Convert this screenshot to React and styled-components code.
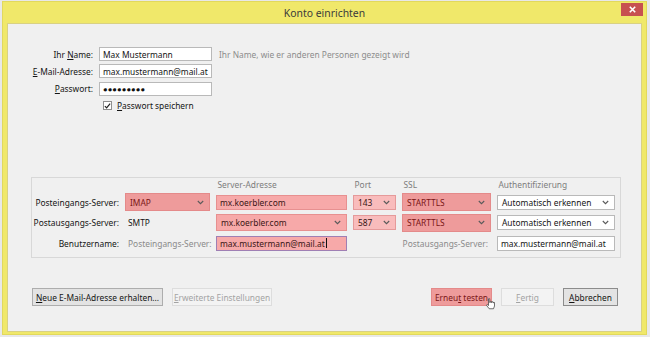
import React from "react";
import styled, { createGlobalStyle } from "styled-components";

const GlobalStyle = createGlobalStyle`
  html, body {
    margin: 0;
    padding: 0;
  }
  body {
    width: 650px;
    height: 337px;
    overflow: hidden;
    background: #e8e8e8;
    font-family: "Noto Sans", "Open Sans", sans-serif;
    font-size: 8.4px;
    color: #141414;
  }
`;

const tones = {
  plain: { bg: "#ffffff", border: "#b9b9b9", color: "#141414" },
  error: { bg: "#f7a9a9", border: "#e79090", color: "#3a1515" },
  strong: { bg: "#ee9b9b", border: "#e48a8a", color: "#7a1616" },
  focus: { bg: "#f7a9a9", border: "#9f7fb4", color: "#3a1515" },
  soft: { bg: "#f9bcbc", border: "#e59a9a", color: "#3a1515" },
};

function Chevron() {
  return (
    <ChevronIcon width="7" height="5" viewBox="0 0 7 5">
      <path d="M0.8 1 L3.5 3.7 L6.2 1" />
    </ChevronIcon>
  );
}

function HandCursor() {
  return (
    <Cursor width="9" height="12" viewBox="0 0 18 24">
      <path d="M5 1.5 C5 0.7 7.5 0.7 7.5 1.5 V9 H8.5 V7 C8.5 6.2 11 6.2 11 7 V9 H11.8 V7.8 C11.8 7 14.2 7 14.2 7.8 V9.8 H15 V9 C15 8.2 17 8.2 17 9 V16 L15 21.5 H6.5 L1.2 15 C0.6 14 1.8 12.6 3 13.4 L5 15 Z" />
    </Cursor>
  );
}

function App() {
  return (
    <>
      <GlobalStyle />
      <Window>
        <TitleBar>
          <span />
          <Title>Konto einrichten</Title>
          <CloseButton>
            <svg width="7" height="7" viewBox="0 0 7 7">
              <path d="M0.8 0.8 L6.2 6.2 M6.2 0.8 L0.8 6.2" />
            </svg>
          </CloseButton>
        </TitleBar>

        <Client>
          <IdentityGrid>
            <FieldLabel>
              Ihr <u>N</u>ame:
            </FieldLabel>
            <TextField $tone="plain">Max Mustermann</TextField>
            <Hint>Ihr Name, wie er anderen Personen gezeigt wird</Hint>

            <FieldLabel>
              <u>E</u>-Mail-Adresse:
            </FieldLabel>
            <TextField $tone="plain">max.mustermann@mail.at</TextField>
            <span />

            <FieldLabel>
              <u>P</u>asswort:
            </FieldLabel>
            <TextField $tone="plain">
              <Dots>●●●●●●●●●</Dots>
            </TextField>
            <span />

            <span />
            <CheckRow>
              <CheckBox>
                <svg width="8" height="8" viewBox="0 0 8 8">
                  <path d="M1 4.2 L3 6.2 L7 1.2" />
                </svg>
              </CheckBox>
              <span>
                <u>P</u>asswort speichern
              </span>
            </CheckRow>
            <span />
          </IdentityGrid>

          <ServerGroup>
            <span />
            <span />
            <ColumnHead>Server-Adresse</ColumnHead>
            <ColumnHead>Port</ColumnHead>
            <ColumnHead>SSL</ColumnHead>
            <ColumnHead>Authentifizierung</ColumnHead>

            <RowLabel>Posteingangs-Server:</RowLabel>
            <SelectBox $tone="strong" $h={18}>
              <span>IMAP</span>
              <Chevron />
            </SelectBox>
            <TextField $tone="error" $h={15}>mx.koerbler.com</TextField>
            <SelectBox $tone="soft">
              <span>143</span>
              <Chevron />
            </SelectBox>
            <SelectBox $tone="strong" $h={18}>
              <span>STARTTLS</span>
              <Chevron />
            </SelectBox>
            <SelectBox $tone="plain">
              <span>Automatisch erkennen</span>
              <Chevron />
            </SelectBox>

            <RowLabel>Postausgangs-Server:</RowLabel>
            <PlainValue>SMTP</PlainValue>
            <SelectBox $tone="error" $h={17}>
              <span>mx.koerbler.com</span>
              <Chevron />
            </SelectBox>
            <SelectBox $tone="soft">
              <span>587</span>
              <Chevron />
            </SelectBox>
            <SelectBox $tone="strong" $h={18}>
              <span>STARTTLS</span>
              <Chevron />
            </SelectBox>
            <SelectBox $tone="plain">
              <span>Automatisch erkennen</span>
              <Chevron />
            </SelectBox>

            <RowLabel>Benutzername:</RowLabel>
            <GreyValue>Posteingangs-Server:</GreyValue>
            <TextField $tone="focus" $h={15}>
              max.mustermann@mail.at<Caret />
            </TextField>
            <GreyValue $span={2} $right>
              Postausgangs-Server:
            </GreyValue>
            <TextField $tone="plain" $h={15}>
              max.mustermann@mail.at
            </TextField>
          </ServerGroup>

          <ButtonBar>
            <Button $w={131}>
              <span>
                <u>N</u>eue E-Mail-Adresse erhalten...
              </span>
            </Button>
            <Button $w={100} $disabled>
              <span>
                <u>E</u>rweiterte Einstellungen
              </span>
            </Button>
            <Spacer />
            <Button $w={61} $tone="strong">
              <span>
                Erneu<u>t</u> testen
              </span>
              <HandCursor />
            </Button>
            <Button $w={53} $disabled>
              <span>
                <u>F</u>ertig
              </span>
            </Button>
            <Button $w={55} $default>
              <span>
                <u>A</u>bbrechen
              </span>
            </Button>
          </ButtonBar>
        </Client>
      </Window>
    </>
  );
}

const Window = styled.div`
  margin: 1px 0 0 2px;
  width: 645px;
  height: 334px;
  box-sizing: border-box;
  background: #f0e86a;
  border: 1px solid #e2d95c;
  padding: 0 4px 2px 4px;
  display: flex;
  flex-direction: column;
`;

const TitleBar = styled.div`
  height: 21px;
  display: grid;
  grid-template-columns: 1fr auto 1fr;
  align-items: center;
`;

const Title = styled.div`
  font-size: 10.4px;
  color: #3a3a3a;
  padding-top: 1px;
`;

const CloseButton = styled.div`
  justify-self: end;
  align-self: start;
  margin: 1px -1px 0 0;
  width: 22px;
  height: 13px;
  background: #c75050;
  display: flex;
  align-items: center;
  justify-content: center;
  svg path {
    stroke: #ffffff;
    stroke-width: 1.6;
    fill: none;
  }
`;

const Client = styled.div`
  flex: 1;
  background: #f0f0f0;
  border: 1px solid #d9d183;
  padding-top: 23px;
  display: flex;
  flex-direction: column;
`;

const IdentityGrid = styled.div`
  display: grid;
  grid-template-columns: 85px 113px auto;
  grid-auto-rows: 14px;
  column-gap: 6px;
  row-gap: 3.3px;
  align-items: center;
`;

const FieldLabel = styled.div`
  text-align: right;
  white-space: nowrap;
  u {
    text-decoration-thickness: 1px;
  }
`;

const TextField = styled.div`
  height: ${(p) => p.$h || 14}px;
  box-sizing: border-box;
  background: ${(p) => tones[p.$tone].bg};
  border: 1px solid ${(p) => tones[p.$tone].border};
  color: ${(p) => tones[p.$tone].color};
  padding: 0 3px;
  display: flex;
  align-items: center;
  white-space: nowrap;
  overflow: hidden;
`;

const Dots = styled.span`
  font-size: 7.6px;
  letter-spacing: 0.1px;
  color: #111;
`;

const Caret = styled.span`
  display: inline-block;
  width: 1px;
  height: 10px;
  background: #111;
  margin-left: 1px;
`;

const Hint = styled.div`
  margin-left: 1px;
  color: #8c8c8c;
  white-space: nowrap;
`;

const CheckRow = styled.div`
  display: flex;
  align-items: center;
  gap: 5px;
  padding-left: 4px;
  white-space: nowrap;
`;

const CheckBox = styled.div`
  width: 9px;
  height: 9px;
  box-sizing: border-box;
  background: #ffffff;
  border: 1px solid #8f8f8f;
  display: flex;
  align-items: center;
  justify-content: center;
  svg path {
    stroke: #222;
    stroke-width: 1.4;
    fill: none;
  }
`;

const ServerGroup = styled.div`
  margin: 64px 0 0 23px;
  width: 590px;
  box-sizing: border-box;
  border: 1px solid #d8d8d8;
  padding: 0 4px 5px 0;
  display: grid;
  grid-template-columns: 87px 85px 131px 43px 89px 118px;
  grid-template-rows: 13px 18px 18px 18px;
  column-gap: 6px;
  row-gap: 2.5px;
  align-items: center;
`;

const ColumnHead = styled.div`
  color: #7d7d7d;
  padding-left: 1.5px;
  white-space: nowrap;
`;

const RowLabel = styled.div`
  text-align: right;
  white-space: nowrap;
`;

const PlainValue = styled.div`
  padding-left: 3px;
`;

const GreyValue = styled.div`
  color: #8a8a8a;
  white-space: nowrap;
  padding: 0 3px;
  grid-column: span ${(p) => p.$span || 1};
  text-align: ${(p) => (p.$right ? "right" : "left")};
`;

const SelectBox = styled.div`
  height: ${(p) => p.$h || 15}px;
  box-sizing: border-box;
  background: ${(p) => tones[p.$tone].bg};
  border: 1px solid ${(p) => tones[p.$tone].border};
  color: ${(p) => tones[p.$tone].color};
  padding: 0 5px 0 4px;
  display: flex;
  align-items: center;
  justify-content: space-between;
  white-space: nowrap;
  overflow: hidden;
`;

const ChevronIcon = styled.svg`
  flex: none;
  path {
    stroke: #5a5a5a;
    stroke-width: 1.1;
    fill: none;
  }
`;

const ButtonBar = styled.div`
  margin-top: 30px;
  padding: 0 23px 0 24px;
  display: flex;
  align-items: center;
  gap: 9px;
`;

const Spacer = styled.div`
  flex: 1;
`;

const Button = styled.div`
  position: relative;
  width: ${(p) => p.$w}px;
  height: 18px;
  box-sizing: border-box;
  display: flex;
  align-items: center;
  justify-content: center;
  white-space: nowrap;
  background: ${(p) =>
    p.$tone === "strong" ? "#ee9b9b" : p.$disabled ? "#f3f3f3" : "#e3e3e3"};
  border: 1px solid
    ${(p) =>
      p.$tone === "strong"
        ? "#e48a8a"
        : p.$disabled
        ? "#dddddd"
        : p.$default
        ? "#8c8c8c"
        : "#adadad"};
  color: ${(p) =>
    p.$tone === "strong" ? "#7a1616" : p.$disabled ? "#a3a3a3" : "#141414"};
`;

const Cursor = styled.svg`
  position: absolute;
  left: 54px;
  top: 9px;
  path {
    fill: #ffffff;
    stroke: #333;
    stroke-width: 1.4;
  }
`;

export default App;
